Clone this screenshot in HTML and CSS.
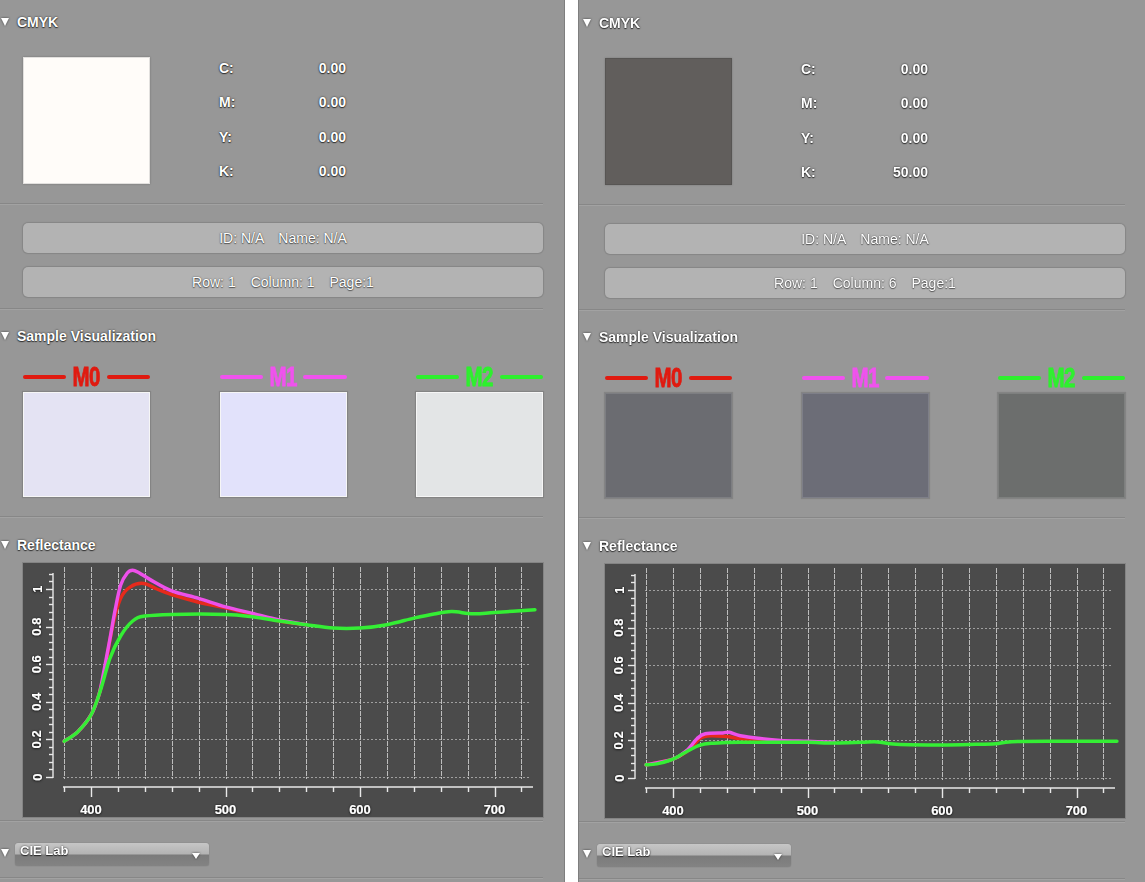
FILE: index.html
```html
<!DOCTYPE html>
<html lang="en">
<head>
<meta charset="utf-8">
<title>CMYK Sample Inspector</title>
<link rel="stylesheet" href="styles.css">
</head>
<body>
<div class="page">

  <section class="panel panel-a">
    <div class="hdr"><span class="tri"></span><span>CMYK</span></div>
    <div class="cmyk">
      <div class="swatch swatch-paper"></div>
      <dl class="kv">
        <dt>C:</dt><dd>0.00</dd>
        <dt>M:</dt><dd>0.00</dd>
        <dt>Y:</dt><dd>0.00</dd>
        <dt>K:</dt><dd>0.00</dd>
      </dl>
    </div>
    <div class="sep sep-cmyk"></div>
    <div class="bars">
      <div class="bar bar-id"><span>ID: N/A</span><span>Name: N/A</span></div>
      <div class="bar bar-pos"><span>Row: 1</span><span>Column: 1</span><span>Page:1</span></div>
    </div>
    <div class="sep sep-bars"></div>
    <div class="hdr hdr-samples"><span class="tri"></span><span>Sample Visualization</span></div>
    <div class="samples">
      <div class="sample m0"><div class="legend"><i></i><b>M0</b><i></i></div><div class="chip chip-a0"></div></div>
      <div class="sample m1"><div class="legend"><i></i><b>M1</b><i></i></div><div class="chip chip-a1"></div></div>
      <div class="sample m2"><div class="legend"><i></i><b>M2</b><i></i></div><div class="chip chip-a2"></div></div>
    </div>
    <div class="sep sep-samples"></div>
    <div class="hdr hdr-refl"><span class="tri"></span><span>Reflectance</span></div>
    <div class="chart" data-set="a"></div>
    <div class="sep sep-chart"></div>
    <div class="cie"><span class="tri"></span><div class="popup"><span>CIE Lab</span><span class="popup-arrow"></span></div></div>
    <div class="sep sep-end"></div>
  </section>

  <section class="panel panel-b">
    <div class="hdr"><span class="tri"></span><span>CMYK</span></div>
    <div class="cmyk">
      <div class="swatch swatch-k50"></div>
      <dl class="kv">
        <dt>C:</dt><dd>0.00</dd>
        <dt>M:</dt><dd>0.00</dd>
        <dt>Y:</dt><dd>0.00</dd>
        <dt>K:</dt><dd>50.00</dd>
      </dl>
    </div>
    <div class="sep sep-cmyk"></div>
    <div class="bars">
      <div class="bar bar-id"><span>ID: N/A</span><span>Name: N/A</span></div>
      <div class="bar bar-pos"><span>Row: 1</span><span>Column: 6</span><span>Page:1</span></div>
    </div>
    <div class="sep sep-bars"></div>
    <div class="hdr hdr-samples"><span class="tri"></span><span>Sample Visualization</span></div>
    <div class="samples">
      <div class="sample m0"><div class="legend"><i></i><b>M0</b><i></i></div><div class="chip chip-b0"></div></div>
      <div class="sample m1"><div class="legend"><i></i><b>M1</b><i></i></div><div class="chip chip-b1"></div></div>
      <div class="sample m2"><div class="legend"><i></i><b>M2</b><i></i></div><div class="chip chip-b2"></div></div>
    </div>
    <div class="sep sep-samples"></div>
    <div class="hdr hdr-refl"><span class="tri"></span><span>Reflectance</span></div>
    <div class="chart" data-set="b"></div>
    <div class="sep sep-chart"></div>
    <div class="cie"><span class="tri"></span><div class="popup"><span>CIE Lab</span><span class="popup-arrow"></span></div></div>
    <div class="sep sep-end"></div>
  </section>

</div>
<script src="script.js"></script>
</body>
</html>
```

FILE: styles.css
```css
* { box-sizing: border-box; }

html, body {
  margin: 0;
  padding: 0;
}

body {
  background: #ffffff;
  font-family: "Liberation Sans", Arial, sans-serif;
  color: #ffffff;
}

.page {
  display: flex;
  height: 882px;
  overflow: hidden;
}

.panel {
  flex: none;
  width: 569px;
  height: 882px;
  background: #979797;
  border-left: 1px solid #7e7e7e;
  border-right: 1px solid #7e7e7e;
  padding: 12px 21px 0 0;
  display: flex;
  flex-direction: column;
}

.panel-a { margin-left: -4px; }
.panel-b { margin-left: 13px; padding-top: 13px; }

/* white text with dark halo, as in the Mac inspector */
.hdr, .kv, .popup {
  text-shadow: 0 0 2px rgba(0, 0, 0, 0.8), 0 1px 1px rgba(0, 0, 0, 0.6);
}

.bar {
  text-shadow: 0 0 1.5px rgba(0, 0, 0, 0.7), 0 1px 1px rgba(0, 0, 0, 0.45);
}

.hdr {
  display: flex;
  align-items: center;
  gap: 8px;
  height: 20px;
  padding-left: 4px;
  font-size: 14px;
  font-weight: bold;
  line-height: 20px;
}

.tri {
  flex: none;
  width: 0;
  height: 0;
  border-left: 4.5px solid transparent;
  border-right: 4.5px solid transparent;
  border-top: 8px solid #ffffff;
  filter: drop-shadow(0 0 1px rgba(0, 0, 0, 0.6));
}

/* CMYK block */
.cmyk {
  display: flex;
  margin-top: 25px;
  padding-left: 26px;
}

.swatch {
  flex: none;
  width: 127px;
  height: 127px;
}

.swatch-paper {
  background: #fffcf9;
  border: 1px solid #e2e0de;
  box-shadow: 0 0 2px rgba(0, 0, 0, 0.25);
}

.swatch-k50 {
  background: #615e5c;
  border: 1px solid #575553;
  box-shadow: 0 0 2px rgba(0, 0, 0, 0.2);
}

.kv {
  margin: 0 0 0 69px;
  width: 127px;
  display: grid;
  grid-template-columns: 1fr auto;
  row-gap: 12.3px;
  align-content: start;
  font-size: 14px;
  font-weight: bold;
  line-height: 22px;
}

.kv dt, .kv dd { margin: 0; }
.kv dd { text-align: right; }

/* separators */
.sep {
  flex: none;
  height: 2px;
  border-top: 1px solid #878787;
  border-bottom: 1px solid #a2a2a2;
}

.sep-cmyk { margin-top: 19px; }
.sep-bars { margin-top: 11px; }
.sep-samples { margin-top: 19px; }
.sep-chart { margin-top: 3px; }
.sep-end { margin-top: 11px; }

/* info bars */
.bars {
  display: flex;
  flex-direction: column;
  gap: 14px;
  margin-top: 18px;
  padding-left: 26px;
}

.bar {
  height: 30px;
  display: flex;
  justify-content: center;
  align-items: center;
  background: #b3b3b3;
  border-radius: 5px;
  box-shadow: 0 0 1px 1px rgba(0, 0, 0, 0.12);
  font-size: 14px;
}

.bar-id { gap: 14px; }
.bar-pos { gap: 15px; }

.hdr-samples { margin-top: 16px; }
.hdr-refl { margin-top: 17px; }

/* sample visualization */
.samples {
  display: flex;
  justify-content: space-between;
  margin-top: 21px;
  padding-left: 26px;
}

.sample { width: 127px; }

.m0 { color: #e01a10; }
.m1 { color: #f052ee; }
.m2 { color: #2ef02e; }

.legend {
  height: 20px;
  display: flex;
  align-items: center;
  gap: 6px;
}

.legend i {
  flex: 1;
  height: 4px;
  border-radius: 2px;
  background: currentColor;
}

/* condensed bold caption: Liberation Sans Bold squeezed horizontally */
.legend b {
  display: inline-block;
  margin: 0 -4px;
  font-family: "Liberation Sans", Arial, sans-serif;
  font-weight: bold;
  font-size: 27px;
  line-height: 20px;
  letter-spacing: -0.5px;
  -webkit-text-stroke: 0.8px currentColor;
  transform: scaleX(0.76);
}

.chip {
  margin-top: 5px;
  height: 105px;
  border: 1px solid #f6f6f6;
  box-shadow: 0 0 1px 1px rgba(0, 0, 0, 0.12);
}

.chip-a0 { background: #e4e3f3; }
.chip-a1 { background: #e2e2fb; }
.chip-a2 { background: #e3e5e6; }

.chip-b0 { background: #6b6c71; border-color: #7d7e82; }
.chip-b1 { background: #6c6d77; border-color: #7e7f88; }
.chip-b2 { background: #6c6e6d; border-color: #7e807f; }

/* reflectance chart */
.chart {
  flex: none;
  margin-top: 8px;
  margin-left: 26px;
  width: 520px;
  height: 254px;
  background: #4b4b4b;
  box-shadow: 0 0 0 1px rgba(0, 0, 0, 0.12);
}

.chart svg { display: block; }

.vgrid {
  stroke: #d2d2d2;
  stroke-width: 1;
  stroke-dasharray: 5 1;
  opacity: 0.85;
}

.hgrid {
  stroke: #bdbdbd;
  stroke-width: 1;
  stroke-dasharray: 2 2;
  opacity: 0.75;
}

.axis line {
  stroke: #e8e8e8;
  stroke-width: 1.4;
}

.lbl {
  fill: #ffffff;
  font-family: "Liberation Sans", Arial, sans-serif;
  font-size: 13px;
  font-weight: bold;
}

.curve {
  fill: none;
  stroke-width: 3.5;
  stroke-linecap: round;
  stroke-linejoin: round;
}

.curve-red { stroke: #e62a1c; }
.curve-magenta { stroke: #ee50ea; }
.curve-green { stroke: #34ee34; }

/* CIE Lab popup row */
.cie {
  display: flex;
  align-items: flex-start;
  gap: 6px;
  height: 23px;
  margin-top: 21px;
  padding-left: 4px;
}

.cie .tri { margin-top: 6px; }

.popup {
  width: 194px;
  height: 23px;
  display: flex;
  justify-content: space-between;
  padding: 1px 9px 0 5px;
  border-radius: 3px;
  background: linear-gradient(#c6c6c6, #b3b3b3 48%, #7b7b7b 52%, #838383);
  box-shadow: 0 0 1px rgba(0, 0, 0, 0.35);
  font-size: 13px;
  font-weight: bold;
  line-height: 13px;
}

.popup-arrow {
  align-self: center;
  margin-top: 2px;
  width: 0;
  height: 0;
  border-left: 4px solid transparent;
  border-right: 4px solid transparent;
  border-top: 6px solid #ffffff;
  filter: drop-shadow(0 0 1px rgba(0, 0, 0, 0.6));
}
```

FILE: script.js
```js
(function () {
  var NS = 'http://www.w3.org/2000/svg';

  var data = {
    a: {
      red: [[380, .19], [390, .24], [400, .33], [406, .44], [410, .56], [416, .80], [422, .95], [429, 1.01], [439, 1.03], [449, 1.0], [460, .97], [480, .93], [500, .90], [520, .865], [540, .83], [560, .81]],
      magenta: [[380, .19], [390, .24], [400, .33], [406, .44], [410, .58], [414, .73], [418, .89], [422, 1.02], [427, 1.085], [431, 1.1], [436, 1.085], [444, 1.05], [460, .99], [480, .95], [500, .905], [520, .87], [540, .835], [560, .81]],
      green: [[380, .19], [390, .24], [400, .33], [407, .46], [414, .63], [422, .75], [431, .83], [440, .856], [460, .865], [500, .865], [520, .852], [540, .83], [560, .81], [580, .792], [600, .792], [620, .81], [640, .845], [655, .867], [668, .88], [684, .868], [700, .875], [730, .89]]
    },
    b: {
      red: [[380, .07], [400, .10], [412, .15], [420, .21], [428, .225], [440, .22], [450, .21], [465, .205], [480, .195], [500, .19]],
      magenta: [[380, .07], [400, .10], [410, .145], [418, .21], [424, .235], [437, .24], [442, .243], [450, .225], [465, .21], [480, .20], [500, .195], [520, .19]],
      green: [[380, .07], [388, .075], [400, .10], [410, .14], [420, .175], [430, .185], [450, .19], [480, .19], [500, .19], [520, .186], [540, .19], [552, .192], [566, .18], [600, .176], [625, .179], [640, .182], [652, .193], [690, .195], [730, .196]]
    }
  };

  function X(nm) { return 68 + (nm - 400) * 1.345; }
  function Y(v) { return 214 - 188 * v; }

  function el(name, attrs, parent) {
    var e = document.createElementNS(NS, name);
    for (var k in attrs) { e.setAttribute(k, attrs[k]); }
    if (parent) { parent.appendChild(e); }
    return e;
  }

  function f1(n) { return (Math.round(n * 10) / 10).toString(); }

  function smooth(pts) {
    var p = pts.map(function (d) { return [X(d[0]), Y(d[1])]; });
    var s = 'M' + f1(p[0][0]) + ' ' + f1(p[0][1]);
    for (var i = 0; i < p.length - 1; i++) {
      var p0 = p[i - 1] || p[i], p1 = p[i], p2 = p[i + 1], p3 = p[i + 2] || p2;
      var c1x = p1[0] + (p2[0] - p0[0]) / 6, c1y = p1[1] + (p2[1] - p0[1]) / 6;
      var c2x = p2[0] - (p3[0] - p1[0]) / 6, c2y = p2[1] - (p3[1] - p1[1]) / 6;
      s += ' C' + [c1x, c1y, c2x, c2y, p2[0], p2[1]].map(f1).join(' ');
    }
    return s;
  }

  var boxes = document.querySelectorAll('.chart');
  for (var b = 0; b < boxes.length; b++) {
    var box = boxes[b];
    var key = box.getAttribute('data-set');
    var set = data[key];
    var svg = el('svg', { width: 520, height: 254, viewBox: '0 0 520 254' }, box);
    var defs = el('defs', {}, svg);
    var filt = el('filter', { id: 'halo-' + key, x: '-30%', y: '-30%', width: '160%', height: '160%' }, defs);
    el('feDropShadow', { dx: 0, dy: 0.5, stdDeviation: 0.8, 'flood-color': '#000', 'flood-opacity': 0.9 }, filt);

    var grid = el('g', {}, svg);
    var nm, i;
    for (nm = 380; nm <= 720; nm += 20) {
      var gx = Math.round(X(nm)) + 0.5;
      el('line', { x1: gx, x2: gx, y1: 4, y2: 216, 'class': 'vgrid' }, grid);
    }
    for (i = 0; i <= 5; i++) {
      var gy = Math.round(Y(i * 0.2)) + 0.5;
      el('line', { x1: 40, x2: 508, y1: gy, y2: gy, 'class': 'hgrid' }, grid);
    }

    var ax = el('g', { 'class': 'axis' }, svg);
    el('line', { x1: 40, x2: 510, y1: 224, y2: 224 }, ax);
    for (nm = 380; nm <= 720; nm += 20) {
      var tx = Math.round(X(nm)) + 0.5;
      el('line', { x1: tx, x2: tx, y1: 224, y2: (nm % 100 === 0) ? 234 : 229 }, ax);
    }
    el('line', { x1: 30, x2: 30, y1: 10, y2: 215 }, ax);
    for (i = 0; i <= 27; i++) {
      var ty = Math.round(Y(i * 0.04)) + 0.5;
      el('line', { x1: (i % 5 === 0) ? 23 : 26, x2: 30, y1: ty, y2: ty }, ax);
    }

    var curves = el('g', {}, svg);
    ['red', 'magenta', 'green'].forEach(function (c) {
      el('path', { d: smooth(set[c]), 'class': 'curve curve-' + c }, curves);
    });

    var lbl = el('g', { filter: 'url(#halo-' + key + ')' }, svg);
    [400, 500, 600, 700].forEach(function (n) {
      var t = el('text', { x: f1(X(n)), y: 251, 'text-anchor': 'middle', 'class': 'lbl' }, lbl);
      t.textContent = String(n);
    });
    ['0', '0.2', '0.4', '0.6', '0.8', '1'].forEach(function (s, k) {
      var yy = Y(k * 0.2);
      var t = el('text', {
        x: 14, y: f1(yy), 'text-anchor': 'middle', 'dominant-baseline': 'central',
        transform: 'rotate(-90 14 ' + f1(yy) + ')', 'class': 'lbl'
      }, lbl);
      t.textContent = s;
    });
  }
})();
```
